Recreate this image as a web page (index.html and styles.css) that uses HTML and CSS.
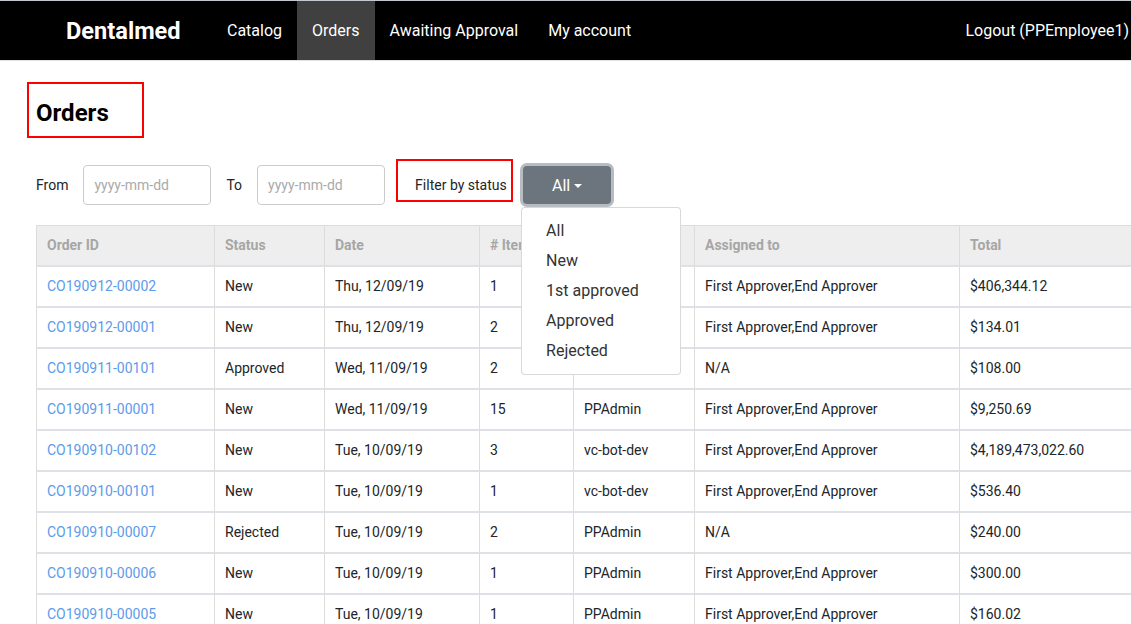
FILE: index.html
```html
<!DOCTYPE html>
<html lang="en">
<head>
<meta charset="utf-8">
<title>Orders - Dentalmed</title>
<link rel="stylesheet" href="styles.css">
</head>
<body>
<nav class="navbar">
  <a class="brand" href="#">Dentalmed</a>
  <a class="nav-link" href="#">Catalog</a>
  <a class="nav-link active" href="#">Orders</a>
  <a class="nav-link" href="#">Awaiting Approval</a>
  <a class="nav-link" href="#">My account</a>
  <a class="nav-link logout" href="#">Logout (PPEmployee1)</a>
</nav>
<main class="main">
  <div class="title-box"><h1 class="title">Orders</h1></div>
  <div class="filters">
    <label class="lbl">From</label>
    <input class="date-input" type="text" placeholder="yyyy-mm-dd">
    <label class="lbl lbl-to">To</label>
    <input class="date-input" type="text" placeholder="yyyy-mm-dd">
    <div class="status-box">Filter by status</div>
    <div class="dropdown">
      <button class="btn-status" type="button">All <span class="caret"></span></button>
      <ul class="menu">
        <li>All</li>
        <li>New</li>
        <li>1st approved</li>
        <li>Approved</li>
        <li>Rejected</li>
      </ul>
    </div>
  </div>
  <div class="table-wrap">
    <table class="orders">
      <colgroup>
        <col class="c1"><col class="c2"><col class="c3"><col class="c4"><col class="c5"><col class="c6"><col class="c7">
      </colgroup>
      <thead>
        <tr><th>Order ID</th><th>Status</th><th>Date</th><th># Items</th><th>Created by</th><th>Assigned to</th><th>Total</th></tr>
      </thead>
      <tbody>
        <tr><td><a href="#">CO190912-00002</a></td><td>New</td><td>Thu, 12/09/19</td><td>1</td><td></td><td>First Approver,End Approver</td><td>$406,344.12</td></tr>
        <tr><td><a href="#">CO190912-00001</a></td><td>New</td><td>Thu, 12/09/19</td><td>2</td><td></td><td>First Approver,End Approver</td><td>$134.01</td></tr>
        <tr><td><a href="#">CO190911-00101</a></td><td>Approved</td><td>Wed, 11/09/19</td><td>2</td><td></td><td>N/A</td><td>$108.00</td></tr>
        <tr><td><a href="#">CO190911-00001</a></td><td>New</td><td>Wed, 11/09/19</td><td>15</td><td>PPAdmin</td><td>First Approver,End Approver</td><td>$9,250.69</td></tr>
        <tr><td><a href="#">CO190910-00102</a></td><td>New</td><td>Tue, 10/09/19</td><td>3</td><td>vc-bot-dev</td><td>First Approver,End Approver</td><td>$4,189,473,022.60</td></tr>
        <tr><td><a href="#">CO190910-00101</a></td><td>New</td><td>Tue, 10/09/19</td><td>1</td><td>vc-bot-dev</td><td>First Approver,End Approver</td><td>$536.40</td></tr>
        <tr><td><a href="#">CO190910-00007</a></td><td>Rejected</td><td>Tue, 10/09/19</td><td>2</td><td>PPAdmin</td><td>N/A</td><td>$240.00</td></tr>
        <tr><td><a href="#">CO190910-00006</a></td><td>New</td><td>Tue, 10/09/19</td><td>1</td><td>PPAdmin</td><td>First Approver,End Approver</td><td>$300.00</td></tr>
        <tr><td><a href="#">CO190910-00005</a></td><td>New</td><td>Tue, 10/09/19</td><td>1</td><td>PPAdmin</td><td>First Approver,End Approver</td><td>$160.02</td></tr>
      </tbody>
    </table>
  </div>
</main>
</body>
</html>
```

FILE: styles.css
```css
* { box-sizing: border-box; }
html, body { margin: 0; padding: 0; overflow: hidden; }
body {
  font-family: Roboto, "Liberation Sans", Arial, sans-serif;
  color: #212529;
  background: #fff;
  font-size: 14px;
}
a { text-decoration: none; }

.navbar {
  display: flex;
  align-items: stretch;
  height: 61px;
  background: #000;
  border-top: 1px solid #c3c9cf;
  border-bottom: 1px solid #e2e2e2;
}
.brand {
  color: #fff;
  font-weight: 700;
  font-size: 23.6px;
  margin-left: 66px;
  width: 146px;
  display: flex;
  align-items: center;
}
.nav-link {
  color: #fff;
  font-size: 16px;
  padding: 0 15px;
  display: flex;
  align-items: center;
}
.nav-link.active { background: #404040; }
.logout { margin-left: auto; padding-right: 2px; }

.main { padding: 21px 0 0 27px; }
.title-box {
  border: 2px solid #f00;
  width: 117px;
  height: 56px;
  padding: 0 0 0 7px;
  display: flex;
  align-items: center;
}
.title {
  margin: 6px 0 0;
  font-size: 24px;
  font-weight: 700;
  color: #000;
}

.filters {
  display: flex;
  align-items: flex-start;
  margin-top: 21px;
  height: 48px;
  padding-left: 9px;
}
.lbl {
  margin-top: 6px;
  line-height: 40px;
  font-size: 14px;
  color: #212529;
  margin-right: 15px;
}
.lbl-to { margin-left: 15px; }
.date-input {
  margin-top: 6px;
  width: 128px;
  height: 40px;
  border: 1px solid #ccc;
  border-radius: 4px;
  padding: 0 10px;
  font-family: Roboto, "Liberation Sans", Arial, sans-serif;
  font-size: 14px;
  color: #212529;
}
.date-input::placeholder { color: #aaa; }
.status-box {
  margin-left: 11px;
  width: 117px;
  height: 43px;
  border: 2px solid #f00;
  padding: 15px 0 0 17px;
  font-size: 14px;
  line-height: 18px;
  color: #212529;
  white-space: nowrap;
}
.dropdown {
  position: relative;
  margin-left: 10px;
  margin-top: 7px;
}
.btn-status {
  width: 88px;
  height: 38px;
  background: #6c757d;
  color: #fff;
  border: none;
  border-radius: 4px;
  box-shadow: 0 0 0 3px #b6bcc2;
  font-family: Roboto, "Liberation Sans", Arial, sans-serif;
  font-size: 16px;
  display: flex;
  align-items: center;
  justify-content: center;
  gap: 4px;
  padding: 0;
}
.caret {
  width: 0; height: 0;
  border-left: 4px solid transparent;
  border-right: 4px solid transparent;
  border-top: 4px solid #fff;
  margin-top: 1px;
}
.menu {
  position: absolute;
  z-index: 5;
  top: 41px;
  left: -2px;
  width: 160px;
  margin: 0;
  padding: 8px 0;
  list-style: none;
  background: #fff;
  border: 1px solid rgba(0,0,0,.15);
  border-radius: 4px;
}
.menu li {
  padding-left: 24px;
  line-height: 30px;
  font-size: 16px;
  color: #333;
}

.table-wrap {
  margin-top: 18px;
  padding-left: 9px;
  overflow: hidden;
}
.orders {
  border-collapse: separate;
  border-spacing: 0;
  table-layout: fixed;
  width: 1144px;
}
.c1 { width: 179px; } .c2 { width: 110px; } .c3 { width: 155px; }
.c4 { width: 94px; } .c5 { width: 121px; } .c6 { width: 265px; } .c7 { width: 220px; }
.orders th, .orders td {
  text-align: left;
  padding: 10px 10px 11px;
  line-height: 18px;
  height: 39px;
  font-size: 14px;
  border-right: 1px solid #dcdcdc;
  border-bottom: 2px solid #dee2e6;
  white-space: nowrap;
  overflow: hidden;
}
.orders th:first-child, .orders td:first-child { border-left: 1px solid #dcdcdc; }
.orders th {
  background: #eee;
  color: #a6a6a6;
  font-weight: 700;
  border-top: 1px solid #dcdcdc;
}
.orders td { color: #212529; }
.orders td a { color: #5c9bea; }
```
